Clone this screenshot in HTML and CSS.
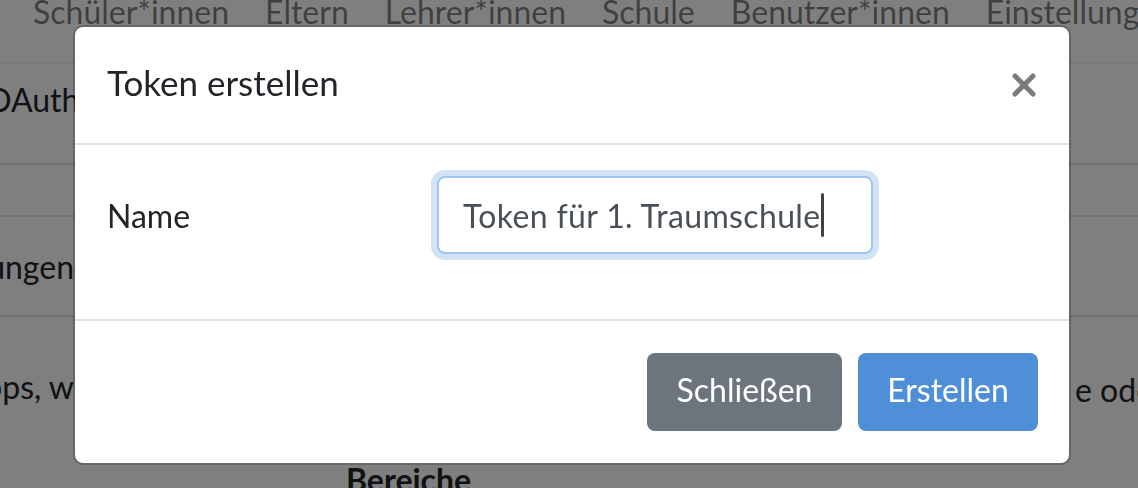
FILE: index.html
```html
<!DOCTYPE html>
<html lang="de">
<head>
    <meta charset="UTF-8">
    <meta name="viewport" content="width=device-width, initial-scale=1.0">
    <title>Token erstellen</title>
    <link rel="stylesheet" href="styles.css">
</head>
<body>
    <!-- page behind the dialog -->
    <nav class="topnav">
        <a href="#">Schüler*innen</a>
        <a href="#">Eltern</a>
        <a href="#">Lehrer*innen</a>
        <a href="#">Schule</a>
        <a href="#">Benutzer*innen</a>
        <a href="#">Einstellungen</a>
    </nav>

    <main class="page">
        <div class="page-row row-title">
            <h2 class="page-title">OAuth-Tokens</h2>
        </div>
        <div class="page-row row-empty"></div>
        <div class="page-row row-setting">
            <div class="cell-clip">Berechtigungen</div>
        </div>
        <div class="page-text">
            <div class="cell-clip">Tokens für Apps, w</div>
            <div class="text-right">e oder</div>
        </div>
        <h3 class="page-sub">Bereiche</h3>
    </main>

    <!-- dialog -->
    <div class="backdrop"></div>
    <div class="modal">
        <div class="modal-header">
            <h5 class="modal-title">Token erstellen</h5>
            <button class="close-btn" type="button" aria-label="Close">
                <svg width="26" height="24" viewBox="0 0 26 24">
                    <path d="M4 3 L22 21 M22 3 L4 21" stroke="#7b7b7b" stroke-width="5" stroke-linecap="round" fill="none"/>
                </svg>
            </button>
        </div>
        <div class="modal-body">
            <div class="form-row">
                <label for="token_name" class="form-label">Name</label>
                <div class="field">
                    <input type="text" id="token_name" class="form-input" value="Token für 1. Traumschule">
                    <span class="caret"></span>
                </div>
            </div>
        </div>
        <div class="modal-footer">
            <button class="btn btn-secondary" type="button">Schließen</button>
            <button class="btn btn-primary" type="button">Erstellen</button>
        </div>
    </div>
</body>
</html>
```

FILE: styles.css
```css
body {
    margin: 0;
    background-color: #ffffff;
    font-family: "Lato", "Noto Sans", sans-serif;
    font-size: 32px;
    color: #212529;
    overflow: hidden;
    height: 488px;
}

/* Page behind the dialog */
.topnav {
    display: flex;
    gap: 36px;
    height: 62px;
    padding-left: 33px;
    border-bottom: 2px solid #ebf1f6;
    white-space: nowrap;
    overflow: hidden;
}

.topnav a {
    color: rgba(0, 0, 0, 0.5);
    text-decoration: none;
    line-height: 32px;
    margin-top: -4px;
}

.page-row {
    display: flex;
    align-items: center;
    border-bottom: 2px solid #dee2e6;
    box-sizing: border-box;
}

.row-title {
    height: 101px;
    align-items: flex-start;
}

.page-title {
    margin: 16px 0 0 -14px;
    font-size: 32px;
    font-weight: 400;
    white-space: nowrap;
}

.row-empty {
    height: 52px;
}

.row-setting {
    height: 100px;
}

.cell-clip {
    width: 74px;
    display: flex;
    justify-content: flex-end;
    white-space: nowrap;
    overflow: hidden;
}

.page-text {
    display: flex;
    justify-content: space-between;
    margin-top: 54px;
    white-space: nowrap;
    line-height: 32px;
}

.text-right {
    width: 120px;
    margin-right: -57px;
    margin-top: 3px;
}

.page-sub {
    margin: 54px 0 0 346px;
    font-size: 32px;
    font-weight: 700;
}

/* Dialog */
.backdrop {
    position: fixed;
    top: 0;
    left: 0;
    width: 100%;
    height: 100%;
    background-color: rgba(0, 0, 0, 0.5);
}

.modal {
    position: fixed;
    top: 25px;
    left: 73px;
    width: 998px;
    box-sizing: border-box;
    background-color: #ffffff;
    border: 2px solid rgba(0, 0, 0, 0.2);
    border-radius: 10px;
    background-clip: padding-box;
}

.modal-header {
    display: flex;
    align-items: center;
    justify-content: space-between;
    height: 116px;
    padding: 0 32px 0 32px;
    border-bottom: 2px solid #dee2e6;
}

.modal-title {
    margin: 0 0 6px 0;
    font-size: 35px;
    font-weight: 400;
    color: #212529;
}

.close-btn {
    background: none;
    border: none;
    padding: 0;
    display: flex;
    cursor: pointer;
}

.modal-body {
    padding: 30px 32px 0 32px;
    height: 144px;
    border-bottom: 2px solid #dee2e6;
}

.form-row {
    display: flex;
    align-items: center;
    height: 80px;
}

.form-label {
    width: 330px;
}

.field {
    position: relative;
}

.form-input {
    display: block;
    width: 436px;
    height: 78px;
    box-sizing: border-box;
    padding: 0 24px;
    font-family: inherit;
    font-size: 32px;
    letter-spacing: 0.35px;
    color: #495057;
    border: 2px solid #9fc6f1;
    border-radius: 8px;
    box-shadow: 0 0 0 6px #d2e3f6;
    outline: none;
}

.caret {
    position: absolute;
    left: 384px;
    top: 17px;
    width: 3px;
    height: 44px;
    border-radius: 2px;
    background-color: #3c4248;
}

.modal-footer {
    display: flex;
    justify-content: flex-end;
    gap: 16px;
    padding: 32px 31px 32px;
}

.btn {
    height: 78px;
    padding: 0 24px 5px;
    font-family: inherit;
    font-size: 32px;
    color: #ffffff;
    border: none;
    border-radius: 8px;
    cursor: pointer;
}

.btn-secondary {
    width: 195px;
    background-color: #6c757d;
}

.btn-primary {
    width: 180px;
    background-color: #4f8fd8;
}
```
